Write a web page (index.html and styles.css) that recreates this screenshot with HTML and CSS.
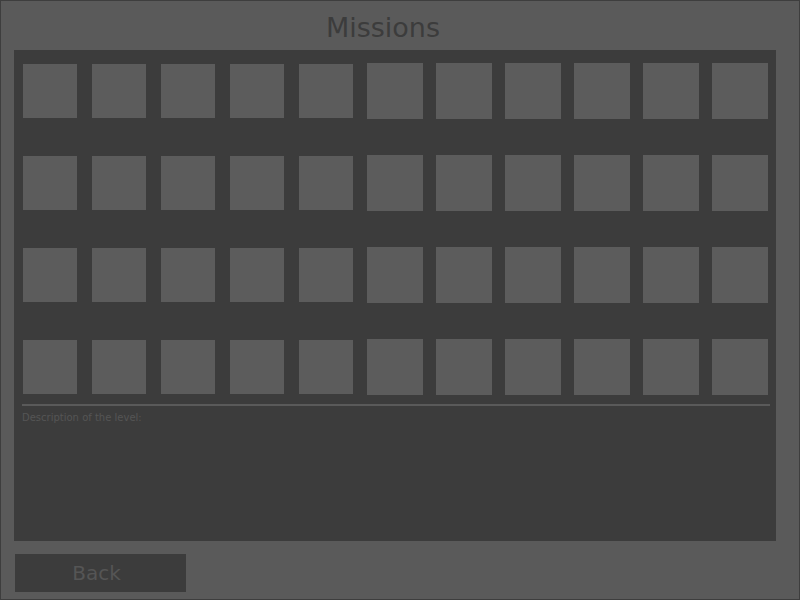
FILE: index.html
```html
<!DOCTYPE html>
<html>
<head>
<meta charset="utf-8">
<link rel="stylesheet" href="styles.css">
</head>
<body>
<div class="window">
  <header class="title">Missions</header>
  <section class="panel">
    <div class="grid">
      <div class="sq"></div><div class="sq"></div><div class="sq"></div><div class="sq"></div><div class="sq"></div>
      <div class="sq big"></div><div class="sq big"></div><div class="sq big"></div><div class="sq big"></div><div class="sq big"></div><div class="sq big"></div>
      <div class="sq"></div><div class="sq"></div><div class="sq"></div><div class="sq"></div><div class="sq"></div>
      <div class="sq big"></div><div class="sq big"></div><div class="sq big"></div><div class="sq big"></div><div class="sq big"></div><div class="sq big"></div>
      <div class="sq"></div><div class="sq"></div><div class="sq"></div><div class="sq"></div><div class="sq"></div>
      <div class="sq big"></div><div class="sq big"></div><div class="sq big"></div><div class="sq big"></div><div class="sq big"></div><div class="sq big"></div>
      <div class="sq"></div><div class="sq"></div><div class="sq"></div><div class="sq"></div><div class="sq"></div>
      <div class="sq big"></div><div class="sq big"></div><div class="sq big"></div><div class="sq big"></div><div class="sq big"></div><div class="sq big"></div>
    </div>
    <div class="sep"></div>
    <p class="desc">Description of the level:</p>
  </section>
  <div class="footer">
    <button class="back">Back</button>
  </div>
</div>
</body>
</html>
```
FILE: styles.css
```css
html, body {
  margin: 0;
  padding: 0;
  background: #5a5a5a;
}
.window {
  box-sizing: border-box;
  width: 800px;
  height: 600px;
  border: 1px solid #3e3e3e;
  background: #5a5a5a;
  display: flex;
  flex-direction: column;
  font-family: "DejaVu Sans", sans-serif;
}
.title {
  height: 49px;
  line-height: 44px;
  padding-top: 5px;
  box-sizing: border-box;
  padding-right: 34px;
  text-align: center;
  font-size: 27px;
  color: #3c3c3c;
}
.panel {
  margin-left: 13px;
  width: 762px;
  height: 491px;
  box-sizing: border-box;
  background: #3c3c3c;
  padding: 13px 6px 0 2px;
  display: flex;
  flex-direction: column;
}
.grid {
  display: grid;
  grid-template-columns: repeat(11, 69px);
  grid-auto-rows: 56px;
  row-gap: 36px;
}
.sq {
  width: 54px;
  height: 54px;
  margin: 1px 0 0 7px;
  background: #5c5c5c;
}
.sq.big {
  width: 56px;
  height: 56px;
  margin: 0 0 0 6px;
}
.sep {
  margin: 9px 0 0 6px;
  height: 2px;
  background: #5a5a5a;
}
.desc {
  margin: 6px 0 0 6px;
  font-size: 10px;
  line-height: 12px;
  color: #555555;
}
.footer {
  padding: 13px 0 0 14px;
}
.back {
  display: block;
  width: 171px;
  height: 38px;
  margin: 0;
  padding: 0 8px 0 0;
  border: none;
  background: #3c3c3c;
  color: #555555;
  font-family: "DejaVu Sans", sans-serif;
  font-size: 20px;
  line-height: 38px;
  text-align: center;
}
```
